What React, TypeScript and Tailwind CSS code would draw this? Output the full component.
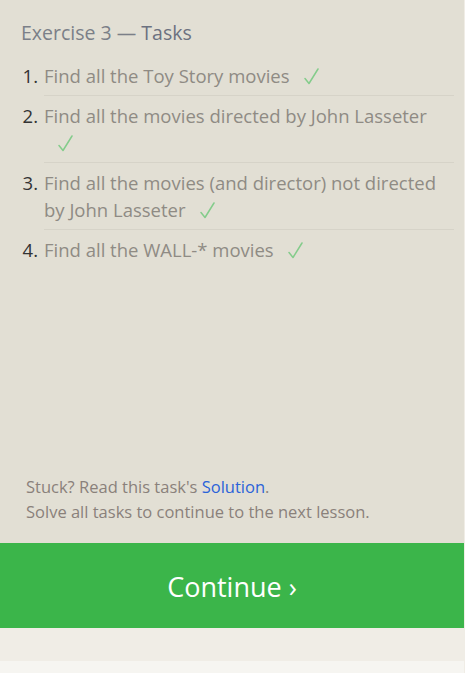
const tasks = [
  "Find all the Toy Story movies",
  "Find all the movies directed by John Lasseter",
  "Find all the movies (and director) not directed by John Lasseter",
  "Find all the WALL-* movies",
];

function Check() {
  return (
    <svg
      className="ml-[14px] inline-block align-[-2px]"
      width="15"
      height="17"
      viewBox="0 0 15 17"
      fill="none"
    >
      <path
        d="M1 10.5 L5 15.5 L14 1"
        stroke="#84cc8b"
        strokeWidth="1.5"
        strokeLinecap="round"
        strokeLinejoin="round"
      />
    </svg>
  );
}

export default function App() {
  return (
    <div className="flex h-[673px] w-[465px] bg-[#f0ede6] font-['Open_Sans',sans-serif]">
      <div className="flex w-[464px] flex-col">
        {/* Tasks panel */}
        <div className="flex h-[543px] flex-col bg-[#e2dfd4]">
          <div className="pl-[21px] pr-[10px] pt-[20px]">
            <h2 className="text-[19.5px] leading-[26px] text-[#7b7f88]">
              Exercise 3 — <span className="text-[#6c7180]">Tasks</span>
            </h2>

            <ol className="mt-[10px]">
              {tasks.map((task, i) => (
                <li key={task} className="group flex text-[18.5px] leading-[27px]">
                  <span className="w-[23px] shrink-0 pt-[6px] pr-[6px] text-right text-[#333]">
                    {i + 1}.
                  </span>
                  <div className="flex-1 border-b border-[#d6d3c8] pt-[6px] pb-[6px] text-[#8f8b84] group-last:border-0">
                    {task}
                    <Check />
                  </div>
                </li>
              ))}
            </ol>
          </div>

          <div className="mt-auto px-[26px] pb-[19px] text-[16.5px] leading-[25px] text-[#8a817b]">
            <p>
              Stuck? Read this task's{" "}
              <a className="text-[#2b63d9]" href="#">
                Solution
              </a>
              .
            </p>
            <p>Solve all tasks to continue to the next lesson.</p>
          </div>
        </div>

        {/* Continue */}
        <button className="flex h-[85px] items-center justify-center bg-[#3bb54a] pt-[3px] text-[27px] text-white">
          Continue ›
        </button>

        <div className="h-[33px] bg-[#f0ede6]" />
        <div className="flex-1 bg-[#f6f5f1]" />
      </div>
    </div>
  );
}
